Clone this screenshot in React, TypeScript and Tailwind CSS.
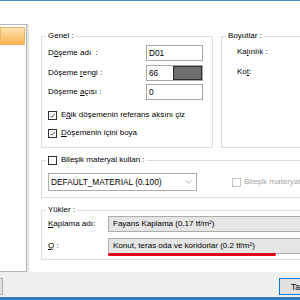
import React from 'react';

function Check({ checked = false, disabled = false }: { checked?: boolean; disabled?: boolean }) {
  return (
    <span
      className={`w-[9px] h-[9px] border bg-white flex items-center justify-center shrink-0 ${
        disabled ? 'border-[#c4c4c4]' : 'border-[#333333]'
      }`}
    >
      {checked && (
        <svg viewBox="0 0 9 9" className="w-[9px] h-[9px]">
          <path d="M1.5 4.6 L3.6 6.7 L7.6 2.2" fill="none" stroke="#222" strokeWidth="1" />
        </svg>
      )}
    </span>
  );
}

function U({ children }: { children: React.ReactNode }) {
  return <span className="underline underline-offset-[1px]">{children}</span>;
}

function TextBox({ value }: { value: string }) {
  return (
    <div className="w-[57px] h-[16px] border border-[#a6a6a6] bg-white flex items-center px-[2px] leading-none text-[8.3px]">
      {value}
    </div>
  );
}

export default function App() {
  return (
    <div className="w-[300px] h-[300px] overflow-hidden bg-white flex flex-col font-['Liberation_Sans',Arial,sans-serif] text-[8px] leading-[10px] text-black">
      {/* window top edge */}
      <div className="h-px bg-[#4a8cc6] shrink-0" />
      <div className="h-[23px] shrink-0" />

      {/* main area */}
      <div className="h-[248px] flex shrink-0">
        {/* list box */}
        <div className="w-[27px] h-full border-t border-r border-b border-[#b4b4b4] bg-white shrink-0">
          <div className="mt-[2px] w-[25px] h-[18px] border border-[#f0b663] bg-gradient-to-b from-[#fde3b2] to-[#f8b34c]" />
        </div>
        <div className="w-[2px] h-full bg-[#e4e4e4] shrink-0" />

        {/* form */}
        <div className="flex-1 pl-[12px] overflow-hidden">
          <div className="flex gap-[8px] mt-[7px] w-[400px]">
            {/* Genel */}
            <fieldset className="w-[172px] h-[117px] border border-[#dcdcdc] px-[6px] shrink-0">
              <legend className="px-[2px] -ml-[2px] h-[10px]">Genel :</legend>
              <div className="flex flex-col">
                <div className="flex items-center h-[16px] mt-[4px]">
                  <span className="w-[98px] whitespace-pre">
                    D<U>ö</U>şeme adı  :
                  </span>
                  <TextBox value="D01" />
                </div>
                <div className="flex items-center h-[16px] mt-[4px]">
                  <span className="w-[98px]">
                    Döşeme <U>r</U>engi :
                  </span>
                  <div className="w-[57px] h-[16px] border border-[#a6a6a6] bg-white flex text-[8.3px]">
                    <span className="w-[26px] flex items-center px-[2px] leading-none">66</span>
                    <span className="flex-1 bg-[#6f6f6f] border border-[#2c2c2c]" />
                  </div>
                </div>
                <div className="flex items-center h-[16px] mt-[3px]">
                  <span className="w-[98px]">
                    Döşeme <U>a</U>çısı :
                  </span>
                  <TextBox value="0" />
                </div>
                <div className="flex items-center gap-[4px] h-[10px] mt-[10px]">
                  <Check checked />
                  <span className="whitespace-nowrap">
                    E<U>ğ</U>ik döşemenin referans aksını çiz
                  </span>
                </div>
                <div className="flex items-center gap-[4px] h-[10px] mt-[8px]">
                  <Check checked />
                  <span className="whitespace-nowrap">
                    <U>D</U>öşemenin içini boya
                  </span>
                </div>
              </div>
            </fieldset>

            {/* Boyutlar */}
            <fieldset className="w-[160px] h-[117px] border border-[#dcdcdc] px-[6px] shrink-0">
              <legend className="px-[2px] -ml-[2px] h-[10px]">Boyutlar :</legend>
              <div className="flex flex-col pl-[9px]">
                <div className="flex items-center h-[16px] mt-[3px]">
                  Ka<U>l</U>ınlık :
                </div>
                <div className="flex items-center h-[16px] mt-[4px]">
                  Ko<U>t</U> :
                </div>
              </div>
            </fieldset>
          </div>

          {/* Bileşik materyal */}
          <fieldset className="w-[300px] h-[43px] mt-[7px] border border-[#dcdcdc] px-[6px]">
            <legend className="px-[2px] -ml-[2px] h-[10px]">
              <span className="flex items-center gap-[4px]">
                <Check />
                <span className="whitespace-nowrap">Bileşik materyal kullan :</span>
              </span>
            </legend>
            <div className="flex items-center mt-[8px] h-[18px]">
              <div className="w-[149px] h-[18px] border border-[#acacac] bg-white flex items-center pl-[2px] pr-[4px] shrink-0">
                <span className="flex-1 whitespace-nowrap text-[8.3px]">DEFAULT_MATERIAL (0.100)</span>
                <svg viewBox="0 0 8 5" className="w-[7px] h-[4px]">
                  <path d="M0.5 0.5 L4 4 L7.5 0.5" fill="none" stroke="#8a8a8a" strokeWidth="0.9" />
                </svg>
              </div>
              <div className="flex items-center gap-[3px] ml-[35px] text-[#a3a3a3] whitespace-nowrap">
                <Check disabled />
                <span>Bileşik materyali kullanarak</span>
              </div>
            </div>
          </fieldset>

          {/* Yükler */}
          <fieldset className="w-[300px] h-[55px] mt-[7px] border border-[#dcdcdc] px-[6px]">
            <legend className="px-[2px] -ml-[2px] h-[10px]">Yükler :</legend>
            <div className="flex flex-col">
              <div className="flex items-center h-[16px] mt-[1px]">
                <span className="w-[60px] shrink-0">
                  <U>K</U>aplama adı:
                </span>
                <div className="w-[200px] h-[16px] border border-[#adadad] bg-[#e5e5e5] flex items-center px-[4px] whitespace-nowrap">
                  Fayans Kaplama (0.17 tf/m²)
                </div>
              </div>
              <div className="flex items-center h-[16px] mt-[6px]">
                <span className="w-[60px] shrink-0">
                  <U>Q</U> :
                </span>
                <div className="relative w-[200px] h-[16px] border border-[#adadad] bg-[#e5e5e5] flex items-center px-[4px] whitespace-nowrap">
                  Konut, teras oda ve koridorlar (0.2 tf/m²)
                  <span className="absolute -left-[1px] top-[14px] w-[168px] h-[2.5px] rounded-full bg-[#e2001a]" />
                </div>
              </div>
            </div>
          </fieldset>
        </div>
      </div>

      {/* button bar */}
      <div className="h-[25px] bg-[#f0f0f0] flex items-start justify-between shrink-0">
        <div className="mt-[6px] w-[3px] h-[17px] bg-[#e1e1e1] border-y border-r border-[#adadad]" />
        <div className="mt-[6px] w-[21px] h-[17px] bg-[#e1e1e1] border-y border-l border-[#0078d7] flex items-center pl-[11px] overflow-hidden whitespace-nowrap text-[8.3px]">
          Tamam
        </div>
      </div>
      <div className="h-[3px] bg-[#2f7bc4] shrink-0" />
    </div>
  );
}
